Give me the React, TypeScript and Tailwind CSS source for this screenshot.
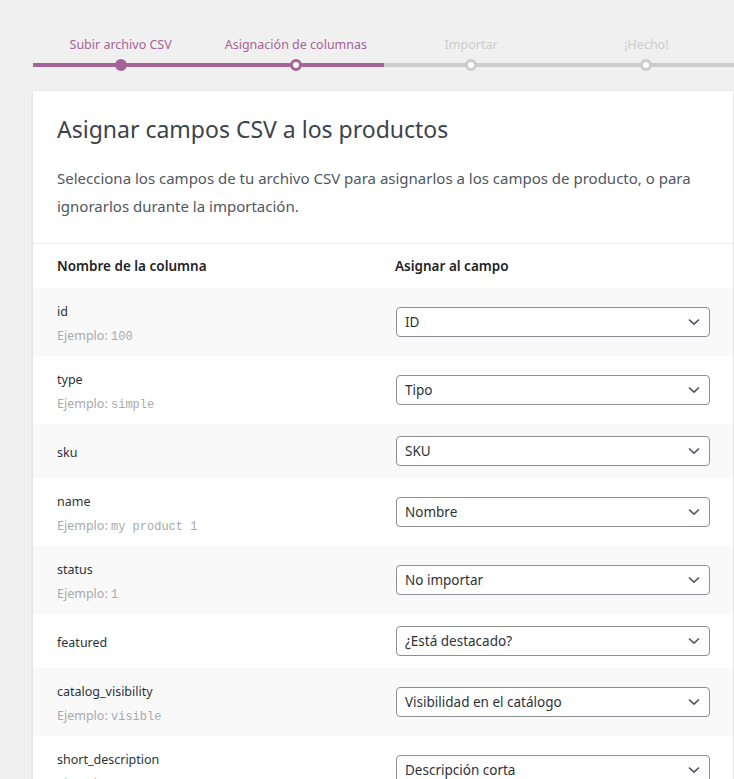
import React from "react";

type Row = { name: string; example?: string; field: string };

const rows: Row[] = [
  { name: "id", example: "100", field: "ID" },
  { name: "type", example: "simple", field: "Tipo" },
  { name: "sku", field: "SKU" },
  { name: "name", example: "my product 1", field: "Nombre" },
  { name: "status", example: "1", field: "No importar" },
  { name: "featured", field: "¿Está destacado?" },
  { name: "catalog_visibility", example: "visible", field: "Visibilidad en el catálogo" },
  { name: "short_description", example: "Descripción corta", field: "Descripción corta" },
];

type StepState = "done" | "active" | "todo";

const steps: { label: string; state: StepState }[] = [
  { label: "Subir archivo CSV", state: "done" },
  { label: "Asignación de columnas", state: "active" },
  { label: "Importar", state: "todo" },
  { label: "¡Hecho!", state: "todo" },
];

function Step({ label, state }: { label: string; state: StepState }) {
  const on = state !== "todo";
  return (
    <li
      className={`relative flex-1 text-center text-[12.5px] leading-5 pt-px pb-[8px] border-b-4 ${
        on ? "border-[#a46497] text-[#a46497]" : "border-[#cccccc] text-[#cccccc]"
      }`}
    >
      {label}
      {state === "done" && (
        <span className="absolute left-1/2 -bottom-[8px] -ml-[6px] w-3 h-3 rounded-full bg-[#a46497]" />
      )}
      {state === "active" && (
        <span className="absolute left-1/2 -bottom-[8px] -ml-[6px] w-3 h-3 rounded-full bg-white border-[3px] border-[#a46497]" />
      )}
      {state === "todo" && (
        <span className="absolute left-1/2 -bottom-[8px] -ml-[6px] w-3 h-3 rounded-full bg-white border-[3px] border-[#cccccc]" />
      )}
    </li>
  );
}

function Chevron() {
  return (
    <svg width="12" height="8" viewBox="0 0 12 8" className="shrink-0">
      <path d="M1 1.5 L6 6.2 L11 1.5" fill="none" stroke="#50575e" strokeWidth="1.6" />
    </svg>
  );
}

function FieldSelect({ value }: { value: string }) {
  return (
    <div className="flex items-center justify-between h-[30px] w-[314px] rounded-[4px] border border-[#8c8f94] bg-white pl-2 pr-[9px] text-[13.5px] text-[#2c3338]">
      <span className="truncate">{value}</span>
      <Chevron />
    </div>
  );
}

export default function App() {
  return (
    <div
      className="min-h-screen bg-[#f0f0f1] pl-[33px] pt-[34px] overflow-hidden"
      style={{ fontFamily: '"Noto Sans", "Open Sans", sans-serif' }}
    >
      <ol className="flex w-[701px] list-none m-0 p-0">
        {steps.map((s) => (
          <Step key={s.label} label={s.label} state={s.state} />
        ))}
      </ol>

      <div className="mt-[24px] w-[700px] bg-white shadow-[0_1px_3px_rgba(0,0,0,0.13)]">
        <header className="px-6 pt-6 pb-[23px] border-b border-[#eeeeee]">
          <h2 className="text-[23px] leading-7 text-[#3c434a] font-normal m-0">
            Asignar campos CSV a los productos
          </h2>
          <p className="mt-[21px] text-[15px] leading-7 text-[#50575e]">
            Selecciona los campos de tu archivo CSV para asignarlos a los campos de producto, o para
            ignorarlos durante la importación.
          </p>
        </header>

        <div className="grid grid-cols-[339px_1fr] px-6 h-[44px] items-center text-[13.5px] font-semibold text-[#1d2327]">
          <div>Nombre de la columna</div>
          <div className="-ml-px">Asignar al campo</div>
        </div>

        {rows.map((r, i) => (
          <div
            key={r.name}
            className={`grid grid-cols-[339px_1fr] items-center px-6 py-3 ${
              i % 2 === 0 ? "bg-[#f9f9f9]" : "bg-white"
            }`}
          >
            <div className="translate-y-[2px]">
              <div className="h-5 text-[12.5px] leading-5 text-[#2c3338]">{r.name}</div>
              {r.example && (
                <div className="mt-1 h-5 flex items-baseline text-[12.5px] leading-5 text-[#a7aaad] whitespace-pre">
                  <span>Ejemplo: </span>
                  <code
                    className="text-[12px] leading-5"
                    style={{ fontFamily: '"Liberation Mono", "DejaVu Sans Mono", monospace' }}
                  >
                    {r.example}
                  </code>
                </div>
              )}
            </div>
            <FieldSelect value={r.field} />
          </div>
        ))}
      </div>
    </div>
  );
}
